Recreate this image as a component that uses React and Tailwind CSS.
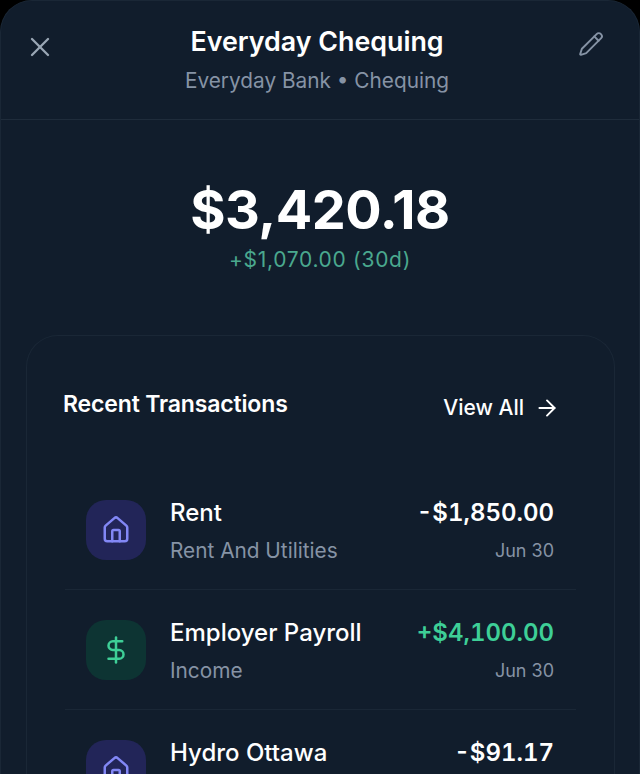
import { X, Pencil, House, DollarSign, ArrowRight } from 'lucide-react'

const TRANSACTIONS = [
  { name: 'Rent', category: 'Rent And Utilities', amount: '-$1,850.00', date: 'Jun 30', kind: 'home' },
  { name: 'Employer Payroll', category: 'Income', amount: '+$4,100.00', date: 'Jun 30', kind: 'income' },
  { name: 'Hydro Ottawa', category: 'Rent And Utilities', amount: '-$91.17', date: 'Jun 29', kind: 'home' },
]

function TransactionRow({ tx, last }) {
  const income = tx.kind === 'income'
  return (
    <div className={`flex items-center h-[120px] pl-[21px] pr-[22px] shrink-0 ${last ? '' : 'border-b border-[#1a2736]'}`}>
      <div className={`w-[60px] h-[60px] rounded-[20px] flex items-center justify-center shrink-0 ${income ? 'bg-[#0d3433]' : 'bg-[#222558]'}`}>
        {income ? (
          <DollarSign size={30} strokeWidth={2} className="text-[#3ecf97]" />
        ) : (
          <House size={30} strokeWidth={2} className="text-[#8287f5]" />
        )}
      </div>
      <div className="ml-6 pt-[2px] flex-1 min-w-0">
        <div className="text-[24px] leading-[32px] font-medium text-white">{tx.name}</div>
        <div className="mt-[8px] text-[20.8px] leading-[28px] text-[#8693a5]">{tx.category}</div>
      </div>
      <div className="pt-[2px] text-right">
        <div className={`text-[24px] leading-[32px] font-semibold tabular-nums ${income ? 'text-[#3ecf97]' : 'text-white'}`}>{tx.amount}</div>
        <div className="mt-[8px] text-[18px] leading-[28px] text-[#8693a5]">{tx.date}</div>
      </div>
    </div>
  )
}

export default function App() {
  return (
    <div className="h-[774px] overflow-hidden bg-black font-['Inter',sans-serif]">
      <div className="h-full rounded-t-[32px] bg-[#111d2c] border border-b-0 border-[#1a2736] flex flex-col">
        {/* header */}
        <div className="h-[119px] shrink-0 border-b border-[#1f2c3b] flex items-start">
          <div className="flex-1 pl-[23px]">
            <button className="mt-[30px] text-[#9aa7b5]">
              <X size={32} strokeWidth={1.75} />
            </button>
          </div>
          <div className="text-center mt-[21px] ml-[6px]">
            <div className="text-[26.8px] leading-[38px] font-semibold text-white">Everyday Chequing</div>
            <div className="mt-[2px] text-[20.8px] leading-[38px] text-[#8693a5]">Everyday Bank • Chequing</div>
          </div>
          <div className="flex-1 flex justify-end pr-[35px]">
            <button className="mt-[30px] text-[#8693a5]">
              <Pencil size={26} strokeWidth={1.75} />
            </button>
          </div>
        </div>

        {/* balance */}
        <div className="shrink-0 text-center pt-[54px]">
          <div className="text-[54px] leading-[72px] font-bold tracking-[-0.5px] text-white">$3,420.18</div>
          <div className="text-[21px] leading-[28px] tracking-[0.7px] text-[#4aa88e]">+$1,070.00 (30d)</div>
        </div>

        {/* transactions card */}
        <div className="mt-[61px] ml-[25px] mr-[24px] flex-1 min-h-0 rounded-t-[32px] border border-b-0 border-[#1a2736] px-[38px] overflow-hidden">
          <div className="flex items-start justify-between -ml-[2px] pr-[16px] pt-[52px] h-[134px]">
            <div className="text-[23px] leading-[32px] font-semibold tracking-[-0.15px] text-white">Recent Transactions</div>
            <button className="mt-[4px] flex items-center gap-[10px] text-[21px] leading-[32px] font-medium text-white">
              View All
              <ArrowRight size={26} strokeWidth={1.75} />
            </button>
          </div>
          <div className="flex flex-col">
            {TRANSACTIONS.map((tx, i) => (
              <TransactionRow key={tx.name} tx={tx} last={i === TRANSACTIONS.length - 1} />
            ))}
          </div>
        </div>
      </div>
    </div>
  )
}
